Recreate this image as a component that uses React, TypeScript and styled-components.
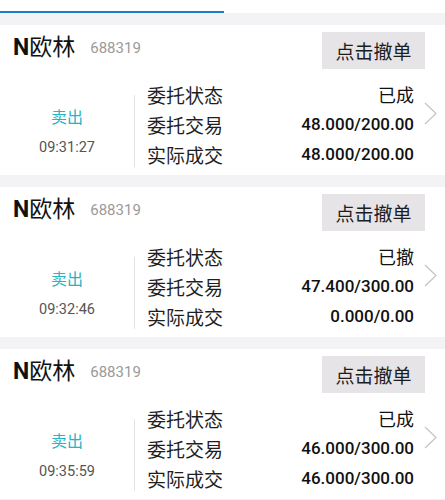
import * as React from 'react';
import styled, { createGlobalStyle } from 'styled-components';

const GlobalStyle = createGlobalStyle`
  body {
    margin: 0;
    background: #f3f2f5;
    font-family: Roboto, "Noto Sans CJK SC", sans-serif;
    color: #1a1a1a;
  }
`;

const Page = styled.div`
  width: 445px;
`;

const TabBar = {
  Container: styled.div`
    height: 13px;
    background: #fff;
    display: flex;
    align-items: flex-end;
  `,

  Indicator: styled.div`
    width: 224px;
    height: 2px;
    background: #1b7dc9;
  `,
};

const List = styled.div`
  display: flex;
  flex-direction: column;
  gap: 12px;
  padding-top: 12px;
`;

const Card = {
  Container: styled.div`
    height: 150px;
    box-sizing: border-box;
    background: #fff;
    padding-top: 7px;
  `,

  Header: styled.div`
    display: flex;
    align-items: flex-start;
    height: 47px;
  `,

  Name: styled.div`
    margin-left: 13px;
    margin-top: 1px;
    font-size: 23px;
    line-height: 30px;
    font-weight: 400;
    color: #111;

    b {
      font-weight: 700;
    }
  `,

  Code: styled.div`
    margin-left: 15px;
    margin-top: 6px;
    font-size: 15px;
    line-height: 20px;
    color: #9a9a9a;
  `,

  CancelButton: styled.button`
    margin-left: auto;
    margin-right: 20px;
    width: 103px;
    height: 37px;
    border: none;
    background: #e6e4e7;
    font-family: "Noto Sans CJK SC", sans-serif;
    font-size: 19px;
    color: #1d1d1d;
    padding: 0;
  `,

  Body: styled.div`
    display: flex;
    height: 91px;
  `,
};

const Side = {
  Container: styled.div`
    width: 134px;
    display: flex;
    flex-direction: column;
    align-items: center;
    padding-top: 28px;
    gap: 8px;
  `,

  Direction: styled.div`
    font-size: 16px;
    line-height: 22px;
    color: #25b4c8;
  `,

  Time: styled.div`
    font-size: 14.5px;
    line-height: 22px;
    color: #555;
  `,
};

const Divider = styled.div`
  width: 1px;
  background: #e2e2e2;
  margin: 16px 0 3px;
`;

const Rows = styled.div`
  flex: 1;
  padding-left: 12px;
  display: flex;
  flex-direction: column;
`;

const Row = {
  Container: styled.div`
    display: flex;
    justify-content: space-between;
    align-items: center;
    height: 30px;
  `,

  Label: styled.span`
    font-family: "Noto Sans CJK SC", sans-serif;
    font-size: 19px;
    color: #1f1f1f;
  `,

  Value: styled.span<{ $cjk?: boolean }>`
    font-family: ${(p) => (p.$cjk ? '"Noto Sans CJK SC", sans-serif' : 'Roboto, sans-serif')};
    font-size: ${(p) => (p.$cjk ? '18px' : '17px')};
    font-weight: ${(p) => (p.$cjk ? 400 : 500)};
    color: #111;
  `,
};

const Chevron = styled.div`
  width: 31px;
  display: flex;
  justify-content: center;
  padding-top: 23px;
  padding-left: 2px;
  box-sizing: border-box;
`;

type Order = {
  time: string;
  status: string;
  order: string;
  deal: string;
};

const orders: Order[] = [
  { time: '09:31:27', status: '已成', order: '48.000/200.00', deal: '48.000/200.00' },
  { time: '09:32:46', status: '已撤', order: '47.400/300.00', deal: '0.000/0.00' },
  { time: '09:35:59', status: '已成', order: '46.000/300.00', deal: '46.000/300.00' },
];

const OrderCard = ({ item }: { item: Order }) => (
  <Card.Container>
    <Card.Header>
      <Card.Name>
        <b>N</b>欧林
      </Card.Name>
      <Card.Code>688319</Card.Code>
      <Card.CancelButton>点击撤单</Card.CancelButton>
    </Card.Header>

    <Card.Body>
      <Side.Container>
        <Side.Direction>卖出</Side.Direction>
        <Side.Time>{item.time}</Side.Time>
      </Side.Container>

      <Divider />

      <Rows>
        <Row.Container>
          <Row.Label>委托状态</Row.Label>
          <Row.Value $cjk>{item.status}</Row.Value>
        </Row.Container>
        <Row.Container>
          <Row.Label>委托交易</Row.Label>
          <Row.Value>{item.order}</Row.Value>
        </Row.Container>
        <Row.Container>
          <Row.Label>实际成交</Row.Label>
          <Row.Value>{item.deal}</Row.Value>
        </Row.Container>
      </Rows>

      <Chevron>
        <svg width="13" height="23" viewBox="0 0 13 23" fill="none">
          <path d="M1 1 L12 11.5 L1 22" stroke="#c4c4c4" strokeWidth="1.2" />
        </svg>
      </Chevron>
    </Card.Body>
  </Card.Container>
);

const App = () => (
  <Page>
    <GlobalStyle />
    <TabBar.Container>
      <TabBar.Indicator />
    </TabBar.Container>

    <List>
      {orders.map((item) => (
        <OrderCard key={item.time} item={item} />
      ))}
    </List>
  </Page>
);

export default App;
